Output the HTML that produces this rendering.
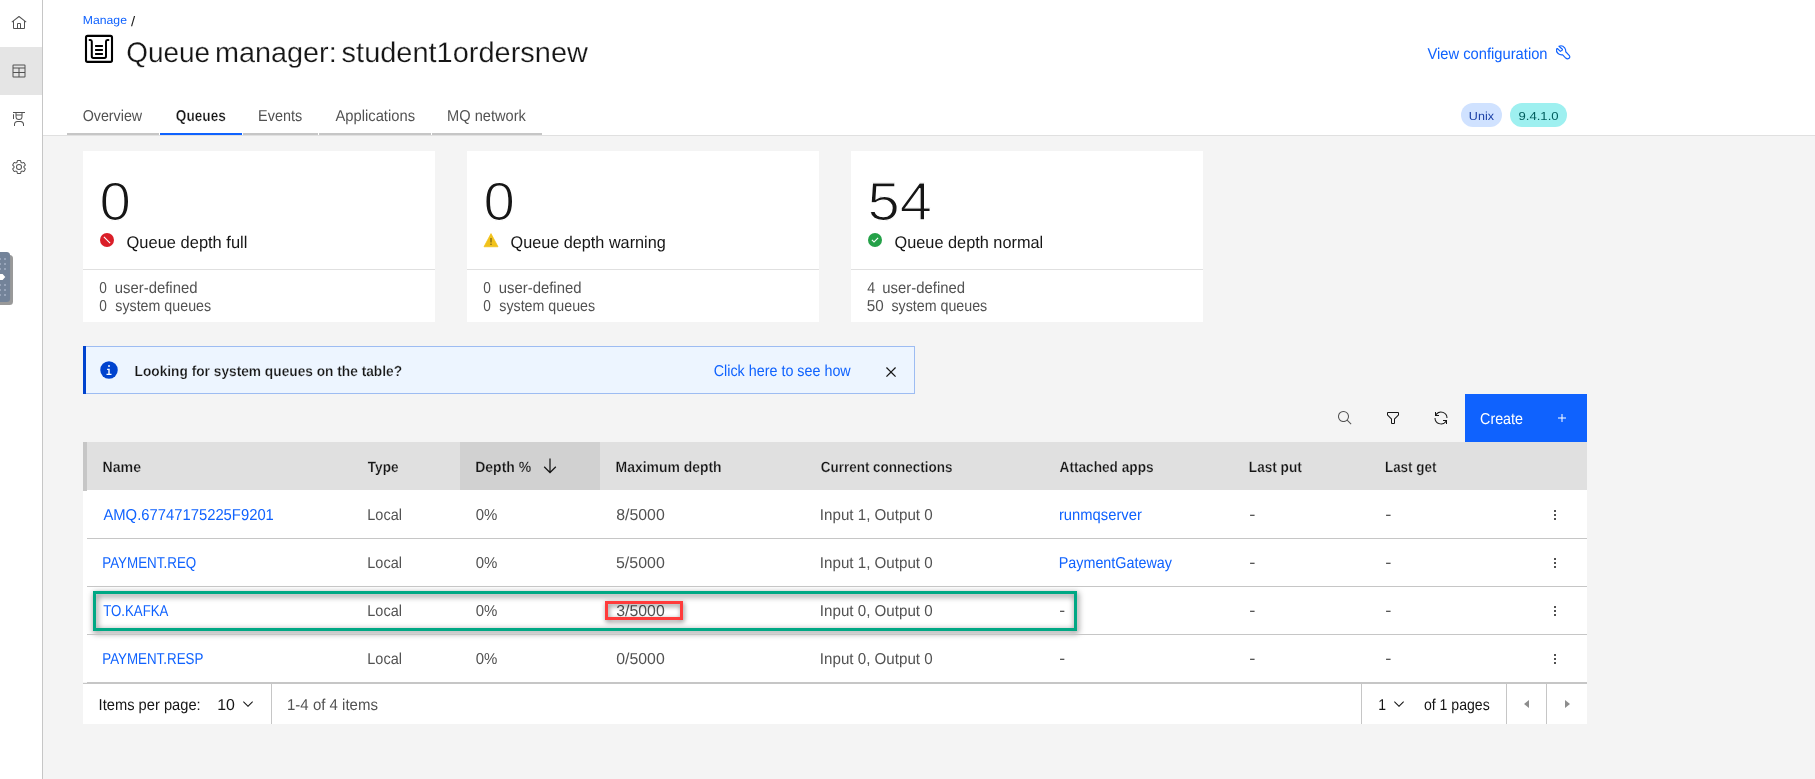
<!DOCTYPE html>
<html><head><meta charset="utf-8">
<style>
*{box-sizing:border-box;margin:0;padding:0}
html,body{width:1815px;height:779px;overflow:hidden;background:#f4f4f4;font-family:"Liberation Sans",sans-serif;font-size:14px;color:#161616}
#root{position:absolute;left:0;top:0;width:1815px;height:779px;will-change:transform;background:#f4f4f4}
.abs{position:absolute}
.t{position:absolute;white-space:pre;line-height:normal;text-rendering:geometricPrecision}
#side{position:absolute;left:0;top:0;width:43px;height:779px;background:#fff;border-right:1px solid #c6c6c6}
#side .sel{position:absolute;left:0;top:47px;width:42px;height:48px;background:#e5e5e5}
#side svg{position:absolute;left:11px;width:16px;height:16px;fill:#525252}
#hdr{position:absolute;left:43px;top:0;width:1772px;height:136px;background:#fff;border-bottom:1px solid #e0e0e0}
.tab{position:absolute;top:101px;height:34px;border-bottom:2px solid #c6c6c6}
.tab.on{border-bottom-color:#0f62fe}
.tag{position:absolute;top:103px;height:24px;border-radius:12px}
.card{position:absolute;top:151px;width:352px;height:171px;background:#fff}
.card .div{position:absolute;left:0;top:118px;width:352px;height:1px;background:#e0e0e0}
.card svg{position:absolute;left:16px;top:81px;width:16px;height:16px}
.ti{position:absolute;width:16px;height:16px;fill:#161616}
#thead{position:absolute;left:83px;top:442px;width:1504px;height:48px;background:#e0e0e0}
.row{position:absolute;left:83px;width:1504px;height:48px;background:#fff}
.row:after{content:"";position:absolute;left:4px;right:0;top:48px;height:1px;background:#c6c6c6;z-index:1}
.ov{position:absolute;left:1464px;top:17px;width:16px;height:16px;fill:#161616}
#pg{position:absolute;left:83px;top:683px;width:1504px;height:41px;background:#fff;border-top:1px solid #c6c6c6}
.vd{position:absolute;top:684px;width:1px;height:40px;background:#c6c6c6}
</style></head><body>
<div id="root">
<div id="side">
 <div class="sel"></div>
 <svg style="top:15px;left:10.7px" viewBox="0 0 32 32"><path d="M16.612,2.214a1.01,1.01,0,0,0-1.242,0L1,13.419l1.243,1.572L4,13.621V26a2.004,2.004,0,0,0,2,2H26a2.004,2.004,0,0,0,2-2V13.63L29.757,15,31,13.428ZM18,26H14V18h4Zm2,0V18a2.002,2.002,0,0,0-2-2H14a2.002,2.002,0,0,0-2,2v8H6V12.062l10-7.79,10,7.8V26Z"/></svg>
 <svg style="top:63px" viewBox="0 0 32 32"><path d="M27,3H5A2,2,0,0,0,3,5V27a2,2,0,0,0,2,2H27a2,2,0,0,0,2-2V5A2,2,0,0,0,27,3Zm0,2V9H5V5ZM17,11H27v7H17Zm-2,7H5V11H15ZM5,20H15v7H5Zm12,7V20H27v7Z"/></svg>
 <svg style="top:111px" viewBox="0 0 32 32"><path d="M26,30H24V27a5.0059,5.0059,0,0,0-5-5H13a5.0059,5.0059,0,0,0-5,5v3H6V27a7.0082,7.0082,0,0,1,7-7h6a7.0082,7.0082,0,0,1,7,7Z"/><path d="M5,6A1,1,0,0,0,4,7v9H6V7A1,1,0,0,0,5,6Z"/><path d="M4,2V4H9v7a7,7,0,0,0,14,0V4h5V2Zm7,2H21V7H11Zm5,12a5,5,0,0,1-5-5V9H21v2A5,5,0,0,1,16,16Z"/></svg>
 <svg style="top:159px" viewBox="0 0 32 32"><path d="M27,16.76c0-.25,0-.5,0-.76s0-.51,0-.77l1.92-1.68A2,2,0,0,0,29.3,11L26.94,7a2,2,0,0,0-1.73-1,2,2,0,0,0-.64.1l-2.43.82a11.350,11.350,0,0,0-1.31-.75l-.51-2.52a2,2,0,0,0-2-1.610H13.640a2,2,0,0,0-2,1.610l-.51,2.52a11.480,11.480,0,0,0-1.320.75L7.430,6.060A2,2,0,0,0,6.790,6,2,2,0,0,0,5.060,7L2.700,11a2,2,0,0,0,.41,2.510L5,15.240c0,.25,0,.5,0,.76s0,.51,0,.77L3.110,18.450A2,2,0,0,0,2.700,21L5.060,25a2,2,0,0,0,1.730,1,2,2,0,0,0,.64-.1l2.430-.82a11.350,11.350,0,0,0,1.310.75l.51,2.520a2,2,0,0,0,2,1.610h4.720a2,2,0,0,0,2-1.610l.51-2.520a11.480,11.480,0,0,0,1.320-.75l2.420.82a2,2,0,0,0,.64.1,2,2,0,0,0,1.730-1L29.300,21a2,2,0,0,0-.41-2.510ZM25.210,24l-3.430-1.160a8.860,8.860,0,0,1-2.710,1.570L18.360,28H13.640l-.71-3.550a9.360,9.360,0,0,1-2.700-1.570L6.790,24,4.430,20l2.720-2.400a8.900,8.900,0,0,1,0-3.130L4.430,12,6.790,8l3.430,1.160a8.860,8.860,0,0,1,2.710-1.570L13.640,4h4.720l.71,3.550a9.360,9.360,0,0,1,2.700,1.570L25.210,8,27.570,12l-2.720,2.400a8.900,8.900,0,0,1,0,3.130L27.570,20Z"/><path d="M16,22a6,6,0,1,1,6-6A5.940,5.940,0,0,1,16,22Zm0-10a3.910,3.910,0,0,0-4,4,3.910,3.910,0,0,0,4,4,3.910,3.910,0,0,0,4-4A3.910,3.910,0,0,0,16,12Z"/></svg>
</div>
<div id="hdr"></div>
<svg class="abs" style="left:80px;top:30px;width:40px;height:40px" viewBox="80 30 40 40"><rect x="86" y="35.9" width="26" height="26" rx="1.6" fill="none" stroke="#000" stroke-width="2.1"/><path d="M89.6,40 H90.4 Q91.8,40 91.8,41.5 V56.3 Q91.8,57.9 93.4,57.9 H104.4 Q106,57.9 106,56.3 V41.5 Q106,40 107.4,40 H108.4" fill="none" stroke="#000" stroke-width="2" stroke-linecap="round"/><path d="M95.1,46H102.9M95.1,49.95H102.9M95.1,53.9H102.9" stroke="#000" stroke-width="2"/></svg>
<svg class="abs" style="left:1548px;top:40px;width:30px;height:24px" viewBox="0 0 30 24"><path d="M10.9,5.5 C12.6,4.8 15.4,5.3 16.9,7.2 C18,8.6 18.1,10 18,11.3 L21.8,15.4 C22.6,16.4 22.3,17.6 21.4,18.2 C20.4,18.9 19,18.8 18,17.9 L14.8,14.5 C13.4,14.7 11.4,14.4 10,13.2 C8.6,12 8,10 8.4,8.5 L9.2,7.9 L12.4,10.9 L14.5,9.6 L14.5,8.7 Z" fill="none" stroke="#0f62fe" stroke-width="1.2" stroke-linejoin="round" transform="translate(0.55,0.95) scale(0.955)"/></svg>
<div class="tab" style="left:67px;width:92px"></div>
<div class="tab on" style="left:160px;width:82px"></div>
<div class="tab" style="left:243px;width:75px"></div>
<div class="tab" style="left:319px;width:112px"></div>
<div class="tab" style="left:432px;width:110px"></div>
<div class="tag" style="left:1461px;width:41px;background:#d0e2ff"></div>
<div class="tag" style="left:1510px;width:57px;background:#9ef0f0"></div>
<div class="card" style="left:83px"><svg viewBox="0 0 32 32"><circle cx="16" cy="16" r="14" fill="#da1e28"/><path d="M21.4,23L9,10.6L10.6,9L23,21.4Z" fill="#fff"/></svg><div class="div"></div></div>
<div class="card" style="left:467px"><svg viewBox="0 0 32 32"><path d="M16,3.2 L30,29.5 H2 Z" fill="#f1c21b" stroke="#f1c21b" stroke-width="1.5" stroke-linejoin="round"/><path d="M14.875,12h2.25v9h-2.25ZM16,26a1.5,1.5,0,1,1,1.5-1.5A1.5,1.5,0,0,1,16,26Z" fill="#161616" fill-opacity=".6"/></svg><div class="div"></div></div>
<div class="card" style="left:851px"><svg viewBox="0 0 32 32"><circle cx="16" cy="16" r="14" fill="#24a148"/><path d="M14,21.591l-5-5L10.591,15,14,18.409,21.41,11l1.596,1.586Z" fill="#fff"/></svg><div class="div"></div></div>
<div class="abs" style="left:83px;top:346px;width:832px;height:48px;background:#edf5ff;border:1px solid #9dbcf2"></div><div class="abs" style="left:83px;top:346px;width:3px;height:48px;background:#0043ce"></div>
<svg class="abs" style="left:99px;top:360px;width:20px;height:20px" viewBox="0 0 32 32"><circle cx="16" cy="16" r="14" fill="#0043ce"/><path d="M16,8a1.5,1.5,0,1,1-1.5,1.5A1.5,1.5,0,0,1,16,8Zm4,16.125H12v-2.25h2.875v-5.75H13v-2.25h4.125v8H20Z" fill="#fff"/></svg>
<svg class="abs" style="left:881px;top:361.5px;width:20px;height:20px" viewBox="0 0 32 32"><path d="M24,9.4,22.6,8,16,14.6,9.4,8,8,9.4,14.6,16,8,22.6,9.400,24,16,17.4,22.6,24,24,22.6,17.4,16,24,9.4Z" fill="#161616"/></svg>
<svg class="ti" style="left:1337.2px;top:410.2px;fill:#525252" viewBox="0 0 32 32"><path d="M29,27.586l-7.552-7.552a11.018,11.018,0,1,0-1.414,1.414L27.586,29ZM4,13a9,9,0,1,1,9,9A9.01,9.01,0,0,1,4,13Z"/></svg>
<svg class="ti" style="left:1385px;top:410px" viewBox="0 0 32 32"><path d="M18,28H14a2,2,0,0,1-2-2V18.41L4.59,11A2,2,0,0,1,4,9.59V6A2,2,0,0,1,6,4H26a2,2,0,0,1,2,2V9.59A2,2,0,0,1,27.41,11L20,18.41V26A2,2,0,0,1,18,28ZM6,6V9.59l8,8V26h4V17.59l8-8V6Z"/></svg>
<svg class="ti" style="left:1433px;top:410px" viewBox="0 0 32 32"><path d="M12,10H6.78A11,11,0,0,1,27,16h2A13,13,0,0,0,6,7.68V4H4v8h8Z"/><path d="M20,22h5.22A11,11,0,0,1,5,16H3a13,13,0,0,0,23,8.32V28h2V20H20Z"/></svg>
<div class="abs" style="left:1465px;top:394px;width:122px;height:48px;background:#0f62fe"></div>
<svg class="abs" style="left:1554px;top:410.3px;width:16px;height:16px;fill:#fff" viewBox="0 0 32 32"><path d="M17,15V8H15v7H8v2h7v7h2V17h7V15Z"/></svg>
<div id="thead"><div class="abs" style="left:0;top:0;width:4px;height:49px;background:#c6c6c6;z-index:2"></div><div class="abs" style="left:377px;top:0;width:140px;height:48px;background:#d1d1d1"></div></div>
<svg class="abs" style="left:540.2px;top:455.5px;width:20px;height:20px;fill:#161616" viewBox="0 0 32 32"><path d="M24.59,16.59,17,24.17V4H15V24.17L7.41,16.59,6,18,16,28,26,18Z"/></svg>
<div class="row" style="top:490px"><svg class="ov" viewBox="0 0 32 32"><circle cx="16" cy="8" r="2"/><circle cx="16" cy="16" r="2"/><circle cx="16" cy="24" r="2"/></svg></div>
<div class="row" style="top:538px"><svg class="ov" viewBox="0 0 32 32"><circle cx="16" cy="8" r="2"/><circle cx="16" cy="16" r="2"/><circle cx="16" cy="24" r="2"/></svg></div>
<div class="row" style="top:586px"><svg class="ov" viewBox="0 0 32 32"><circle cx="16" cy="8" r="2"/><circle cx="16" cy="16" r="2"/><circle cx="16" cy="24" r="2"/></svg></div>
<div class="row" style="top:634px"><svg class="ov" viewBox="0 0 32 32"><circle cx="16" cy="8" r="2"/><circle cx="16" cy="16" r="2"/><circle cx="16" cy="24" r="2"/></svg></div>
<div id="pg"></div>
<svg class="abs" style="left:240px;top:696px;width:16px;height:16px;fill:#161616" viewBox="0 0 32 32"><path d="M16,22,6,12l1.4-1.4,8.6,8.6,8.6-8.6L26,12Z"/></svg>
<div class="vd" style="left:271px"></div>
<div class="vd" style="left:1361px"></div>
<svg class="abs" style="left:1390.5px;top:696px;width:16px;height:16px;fill:#161616" viewBox="0 0 32 32"><path d="M16,22,6,12l1.4-1.4,8.6,8.6,8.6-8.6L26,12Z"/></svg>
<div class="vd" style="left:1506px"></div><div class="vd" style="left:1546px"></div>
<svg class="abs" style="left:1519px;top:696.4px;width:16px;height:16px;fill:#8d8d8d" viewBox="0 0 32 32"><path d="M20,24,10,16,20,8Z"/></svg>
<svg class="abs" style="left:1559px;top:696.4px;width:16px;height:16px;fill:#8d8d8d" viewBox="0 0 32 32"><path d="M12,8,22,16,12,24Z"/></svg>
<div class="t" style="left:82px;top:13px;font-size:12px;color:#0f62fe;transform-origin:0 11px;transform:translate(0.78px,0.00px) scale(1.0180,0.98);">Manage</div>
<div class="t" style="left:131px;top:15px;font-size:12px;color:#161616;transform-origin:0 11px;transform:translate(0.00px,0.00px) scale(1.2308,1.16);">/</div>
<div class="t" style="left:126px;top:36px;font-size:28px;color:#161616;transform-origin:0 25px;transform:translate(0.25px,0.70px) scale(0.9975,1.01);-webkit-text-stroke:.2px #fff;">Queue</div>
<div class="t" style="left:214px;top:36px;font-size:28px;color:#161616;transform-origin:0 25px;transform:translate(0.94px,0.70px) scale(1.0295,1.01);-webkit-text-stroke:.2px #fff;">manager:</div>
<div class="t" style="left:341px;top:36px;font-size:28px;color:#161616;transform-origin:0 25px;transform:translate(0.62px,0.70px) scale(1.0341,1.01);-webkit-text-stroke:.2px #fff;">student1ordersnew</div>
<div class="t" style="left:1427px;top:46px;font-size:14px;color:#0f62fe;transform-origin:0 13px;transform:translate(0.44px,0.20px) scale(1.0522,1.13);">View configuration</div>
<div class="t" style="left:82px;top:108px;font-size:14px;color:#525252;transform-origin:0 13px;transform:translate(0.63px,0.10px) scale(1.0209,1.13);">Overview</div>
<div class="t" style="left:175px;top:108px;font-size:14px;color:#161616;transform-origin:0 13px;transform:translate(0.81px,0.10px) scale(0.9751,1.13);font-weight:bold;-webkit-text-stroke:.22px #fff;">Queues</div>
<div class="t" style="left:258px;top:108px;font-size:14px;color:#525252;transform-origin:0 13px;transform:translate(0.11px,0.10px) scale(1.0293,1.13);">Events</div>
<div class="t" style="left:335px;top:108px;font-size:14px;color:#525252;transform-origin:0 13px;transform:translate(0.50px,0.10px) scale(1.0533,1.13);">Applications</div>
<div class="t" style="left:447px;top:108px;font-size:14px;color:#525252;transform-origin:0 13px;transform:translate(0.10px,0.10px) scale(1.0432,1.13);">MQ network</div>
<div class="t" style="left:1468px;top:108px;font-size:12px;color:#1a3fa6;transform-origin:0 11px;transform:translate(0.85px,0.70px) scale(1.0462,0.97);">Unix</div>
<div class="t" style="left:1518px;top:108px;font-size:12px;color:#005d5d;transform-origin:0 11px;transform:translate(0.45px,0.70px) scale(1.0937,0.97);">9.4.1.0</div>
<div class="t" style="left:99px;top:171px;font-size:54px;color:#161616;transform-origin:0 49px;transform:translate(0.41px,0.00px) scale(1.0462,1.0);-webkit-text-stroke:1.3px #fff;">0</div>
<div class="t" style="left:126px;top:234px;font-size:16px;color:#161616;transform-origin:0 13px;transform:translate(0.53px,0.90px) scale(1.0294,1.06);">Queue depth full</div>
<div class="t" style="left:99px;top:279px;font-size:14px;color:#525252;transform-origin:0 13px;transform:translate(0.21px,0.90px) scale(0.9778,1.13);">0</div>
<div class="t" style="left:114px;top:279px;font-size:14px;color:#525252;transform-origin:0 13px;transform:translate(0.74px,0.90px) scale(1.0632,1.13);">user-defined</div>
<div class="t" style="left:99px;top:297px;font-size:14px;color:#525252;transform-origin:0 13px;transform:translate(0.21px,0.70px) scale(0.9778,1.13);">0</div>
<div class="t" style="left:115px;top:297px;font-size:14px;color:#525252;transform-origin:0 13px;transform:translate(0.29px,0.70px) scale(1.0177,1.13);">system queues</div>
<div class="t" style="left:483px;top:171px;font-size:54px;color:#161616;transform-origin:0 49px;transform:translate(0.41px,0.00px) scale(1.0462,1.0);-webkit-text-stroke:1.3px #fff;">0</div>
<div class="t" style="left:510px;top:234px;font-size:16px;color:#161616;transform-origin:0 13px;transform:translate(0.54px,0.90px) scale(1.0142,1.06);">Queue depth warning</div>
<div class="t" style="left:483px;top:279px;font-size:14px;color:#525252;transform-origin:0 13px;transform:translate(0.21px,0.90px) scale(0.9778,1.13);">0</div>
<div class="t" style="left:498px;top:279px;font-size:14px;color:#525252;transform-origin:0 13px;transform:translate(0.74px,0.90px) scale(1.0632,1.13);">user-defined</div>
<div class="t" style="left:483px;top:297px;font-size:14px;color:#525252;transform-origin:0 13px;transform:translate(0.21px,0.70px) scale(0.9778,1.13);">0</div>
<div class="t" style="left:499px;top:297px;font-size:14px;color:#525252;transform-origin:0 13px;transform:translate(0.29px,0.70px) scale(1.0177,1.13);">system queues</div>
<div class="t" style="left:867px;top:171px;font-size:54px;color:#161616;transform-origin:0 49px;transform:translate(0.58px,0.00px) scale(1.0738,1.0);-webkit-text-stroke:1.3px #fff;">54</div>
<div class="t" style="left:894px;top:234px;font-size:16px;color:#161616;transform-origin:0 13px;transform:translate(0.54px,0.90px) scale(1.0188,1.06);">Queue depth normal</div>
<div class="t" style="left:867px;top:279px;font-size:14px;color:#525252;transform-origin:0 13px;transform:translate(0.25px,0.90px) scale(1.0143,1.13);">4</div>
<div class="t" style="left:882px;top:279px;font-size:14px;color:#525252;transform-origin:0 13px;transform:translate(0.34px,0.90px) scale(1.0632,1.13);">user-defined</div>
<div class="t" style="left:866px;top:297px;font-size:14px;color:#525252;transform-origin:0 13px;transform:translate(0.68px,0.70px) scale(1.0877,1.13);">50</div>
<div class="t" style="left:891px;top:297px;font-size:14px;color:#525252;transform-origin:0 13px;transform:translate(0.39px,0.70px) scale(1.0177,1.13);">system queues</div>
<div class="t" style="left:134px;top:362px;font-size:14px;color:#161616;transform-origin:0 13px;transform:translate(0.52px,0.80px) scale(0.9799,1.04);font-weight:bold;-webkit-text-stroke:.22px #edf5ff;">Looking for system queues on the table?</div>
<div class="t" style="left:713px;top:363px;font-size:14px;color:#0f62fe;transform-origin:0 13px;transform:translate(0.73px,0.00px) scale(1.0233,1.13);">Click here to see how</div>
<div class="t" style="left:1480px;top:411px;font-size:14px;color:#fff;transform-origin:0 13px;transform:translate(0.03px,0.00px) scale(1.0233,1.13);">Create</div>
<div class="t" style="left:102px;top:459px;font-size:14px;color:#161616;transform-origin:0 13px;transform:translate(0.49px,0.00px) scale(1.0122,1.06);font-weight:bold;-webkit-text-stroke:.22px #e0e0e0;">Name</div>
<div class="t" style="left:367px;top:459px;font-size:14px;color:#161616;transform-origin:0 13px;transform:translate(0.76px,0.00px) scale(0.9742,1.06);font-weight:bold;-webkit-text-stroke:.22px #e0e0e0;">Type</div>
<div class="t" style="left:475px;top:459px;font-size:14px;color:#161616;transform-origin:0 13px;transform:translate(0.20px,0.00px) scale(1.0009,1.06);font-weight:bold;-webkit-text-stroke:.22px #d1d1d1;">Depth %</div>
<div class="t" style="left:615px;top:459px;font-size:14px;color:#161616;transform-origin:0 13px;transform:translate(0.61px,0.00px) scale(0.9947,1.06);font-weight:bold;-webkit-text-stroke:.22px #e0e0e0;">Maximum depth</div>
<div class="t" style="left:820px;top:459px;font-size:14px;color:#161616;transform-origin:0 13px;transform:translate(0.72px,0.00px) scale(0.9621,1.06);font-weight:bold;-webkit-text-stroke:.22px #e0e0e0;">Current connections</div>
<div class="t" style="left:1059px;top:459px;font-size:14px;color:#161616;transform-origin:0 13px;transform:translate(0.51px,0.00px) scale(0.9759,1.06);font-weight:bold;-webkit-text-stroke:.22px #e0e0e0;">Attached apps</div>
<div class="t" style="left:1248px;top:459px;font-size:14px;color:#161616;transform-origin:0 13px;transform:translate(0.83px,0.00px) scale(0.9728,1.06);font-weight:bold;-webkit-text-stroke:.22px #e0e0e0;">Last put</div>
<div class="t" style="left:1384px;top:459px;font-size:14px;color:#161616;transform-origin:0 13px;transform:translate(0.94px,0.00px) scale(0.9581,1.06);font-weight:bold;-webkit-text-stroke:.22px #e0e0e0;">Last get</div>
<div class="t" style="left:103px;top:507px;font-size:14px;color:#0f62fe;transform-origin:0 13px;transform:translate(0.40px,0.05px) scale(1.0579,1.13);">AMQ.67747175225F9201</div>
<div class="t" style="left:367px;top:507px;font-size:14px;color:#525252;transform-origin:0 13px;transform:translate(0.31px,0.05px) scale(1.0336,1.13);">Local</div>
<div class="t" style="left:475px;top:507px;font-size:14px;color:#525252;transform-origin:0 13px;transform:translate(0.66px,0.05px) scale(1.0701,1.13);">0%</div>
<div class="t" style="left:616px;top:507px;font-size:14px;color:#525252;transform-origin:0 13px;transform:translate(0.23px,0.05px) scale(1.1329,1.13);">8/5000</div>
<div class="t" style="left:819px;top:507px;font-size:14px;color:#525252;transform-origin:0 13px;transform:translate(0.85px,0.05px) scale(1.0820,1.13);">Input 1, Output 0</div>
<div class="t" style="left:1058px;top:507px;font-size:14px;color:#0f62fe;transform-origin:0 13px;transform:translate(0.94px,0.05px) scale(1.0550,1.13);">runmqserver</div>
<div class="t" style="left:1249px;top:506px;font-size:14px;color:#333;transform-origin:0 13px;transform:translate(0.14px,0.35px) scale(1.3143,1.0);">-</div>
<div class="t" style="left:1385px;top:506px;font-size:14px;color:#333;transform-origin:0 13px;transform:translate(0.24px,0.35px) scale(1.3143,1.0);">-</div>
<div class="t" style="left:102px;top:555px;font-size:14px;color:#0f62fe;transform-origin:0 13px;transform:translate(0.20px,0.05px) scale(0.9569,1.13);">PAYMENT.REQ</div>
<div class="t" style="left:367px;top:555px;font-size:14px;color:#525252;transform-origin:0 13px;transform:translate(0.31px,0.05px) scale(1.0336,1.13);">Local</div>
<div class="t" style="left:475px;top:555px;font-size:14px;color:#525252;transform-origin:0 13px;transform:translate(0.66px,0.05px) scale(1.0701,1.13);">0%</div>
<div class="t" style="left:615px;top:555px;font-size:14px;color:#525252;transform-origin:0 13px;transform:translate(0.95px,0.05px) scale(1.1398,1.13);">5/5000</div>
<div class="t" style="left:819px;top:555px;font-size:14px;color:#525252;transform-origin:0 13px;transform:translate(0.85px,0.05px) scale(1.0820,1.13);">Input 1, Output 0</div>
<div class="t" style="left:1058px;top:555px;font-size:14px;color:#0f62fe;transform-origin:0 13px;transform:translate(0.72px,0.05px) scale(1.0248,1.13);">PaymentGateway</div>
<div class="t" style="left:1249px;top:554px;font-size:14px;color:#333;transform-origin:0 13px;transform:translate(0.14px,0.35px) scale(1.3143,1.0);">-</div>
<div class="t" style="left:1385px;top:554px;font-size:14px;color:#333;transform-origin:0 13px;transform:translate(0.24px,0.35px) scale(1.3143,1.0);">-</div>
<div class="t" style="left:103px;top:603px;font-size:14px;color:#0f62fe;transform-origin:0 13px;transform:translate(0.16px,0.05px) scale(0.9455,1.13);">TO.KAFKA</div>
<div class="t" style="left:367px;top:603px;font-size:14px;color:#525252;transform-origin:0 13px;transform:translate(0.31px,0.05px) scale(1.0336,1.13);">Local</div>
<div class="t" style="left:475px;top:603px;font-size:14px;color:#525252;transform-origin:0 13px;transform:translate(0.66px,0.05px) scale(1.0701,1.13);">0%</div>
<div class="t" style="left:616px;top:603px;font-size:14px;color:#525252;transform-origin:0 13px;transform:translate(0.23px,0.05px) scale(1.1329,1.13);">3/5000</div>
<div class="t" style="left:819px;top:603px;font-size:14px;color:#525252;transform-origin:0 13px;transform:translate(0.85px,0.05px) scale(1.0820,1.13);">Input 0, Output 0</div>
<div class="t" style="left:1059px;top:602px;font-size:14px;color:#333;transform-origin:0 13px;transform:translate(0.37px,0.35px) scale(1.2571,1.0);">-</div>
<div class="t" style="left:1249px;top:602px;font-size:14px;color:#333;transform-origin:0 13px;transform:translate(0.14px,0.35px) scale(1.3143,1.0);">-</div>
<div class="t" style="left:1385px;top:602px;font-size:14px;color:#333;transform-origin:0 13px;transform:translate(0.24px,0.35px) scale(1.3143,1.0);">-</div>
<div class="t" style="left:102px;top:651px;font-size:14px;color:#0f62fe;transform-origin:0 13px;transform:translate(0.21px,0.05px) scale(0.9538,1.13);">PAYMENT.RESP</div>
<div class="t" style="left:367px;top:651px;font-size:14px;color:#525252;transform-origin:0 13px;transform:translate(0.31px,0.05px) scale(1.0336,1.13);">Local</div>
<div class="t" style="left:475px;top:651px;font-size:14px;color:#525252;transform-origin:0 13px;transform:translate(0.66px,0.05px) scale(1.0701,1.13);">0%</div>
<div class="t" style="left:616px;top:651px;font-size:14px;color:#525252;transform-origin:0 13px;transform:translate(0.23px,0.05px) scale(1.1329,1.13);">0/5000</div>
<div class="t" style="left:819px;top:651px;font-size:14px;color:#525252;transform-origin:0 13px;transform:translate(0.85px,0.05px) scale(1.0820,1.13);">Input 0, Output 0</div>
<div class="t" style="left:1059px;top:650px;font-size:14px;color:#333;transform-origin:0 13px;transform:translate(0.37px,0.35px) scale(1.2571,1.0);">-</div>
<div class="t" style="left:1249px;top:650px;font-size:14px;color:#333;transform-origin:0 13px;transform:translate(0.14px,0.35px) scale(1.3143,1.0);">-</div>
<div class="t" style="left:1385px;top:650px;font-size:14px;color:#333;transform-origin:0 13px;transform:translate(0.24px,0.35px) scale(1.3143,1.0);">-</div>
<div class="t" style="left:98px;top:697px;font-size:14px;color:#161616;transform-origin:0 13px;transform:translate(0.59px,0.30px) scale(1.0491,1.13);">Items per page:</div>
<div class="t" style="left:217px;top:697px;font-size:14px;color:#161616;transform-origin:0 13px;transform:translate(0.26px,0.30px) scale(1.1357,1.13);">10</div>
<div class="t" style="left:287px;top:697px;font-size:14px;color:#525252;transform-origin:0 13px;transform:translate(0.03px,0.30px) scale(1.0715,1.13);">1-4 of 4 items</div>
<div class="t" style="left:1378px;top:697px;font-size:14px;color:#161616;transform-origin:0 13px;transform:translate(0.30px,0.30px) scale(1.0000,1.13);">1</div>
<div class="t" style="left:1423px;top:697px;font-size:14px;color:#161616;transform-origin:0 13px;transform:translate(0.90px,0.30px) scale(1.0070,1.13);">of 1 pages</div>
<div class="abs" style="left:93px;top:591px;width:984px;height:40px;border:3px solid #00a884;filter:drop-shadow(1px 2.5px 3px rgba(0,0,0,.6))"></div>
<div class="abs" style="left:605px;top:601px;width:78px;height:19px;border:3px solid #ff3b3b;filter:drop-shadow(1px 2.5px 2.5px rgba(0,0,0,.5))"></div>
<svg class="abs" style="left:0;top:248px;width:16px;height:60px" viewBox="0 248 16 60"><rect x="-5" y="255" width="18" height="50" rx="3.5" fill="#999"/><rect x="-8" y="252" width="18.1" height="50" rx="3.5" fill="#738399"/><g fill="#98a5ba"><rect x="-1" y="258" width="2" height="2"/><rect x="4" y="258" width="2" height="2"/><rect x="-1" y="263" width="2" height="2"/><rect x="4" y="263" width="2" height="2"/><rect x="-1" y="268" width="2" height="2"/><rect x="4" y="268" width="2" height="2"/><rect x="-1" y="284" width="2" height="2"/><rect x="4" y="284" width="2" height="2"/><rect x="-1" y="289" width="2" height="2"/><rect x="4" y="289" width="2" height="2"/><rect x="-1" y="294" width="2" height="2"/><rect x="4" y="294" width="2" height="2"/></g><path d="M-1,274 H2.6 L5.3,277 L2.6,280 H-1Z" fill="#fff"/></svg>
</div>
</body></html>
